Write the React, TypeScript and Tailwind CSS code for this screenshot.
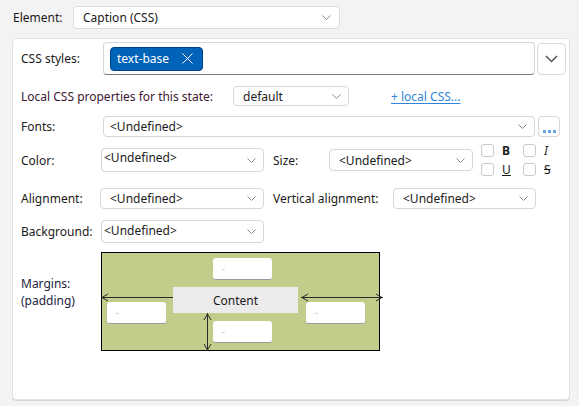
import React from "react";

function Chevron({ className = "" }: { className?: string }) {
  return (
    <svg width="9" height="5" viewBox="0 0 9 5" className={className} fill="none">
      <path d="M0.5 0.5 L4.5 4.5 L8.5 0.5" stroke="#8a8a8a" strokeWidth="1" />
    </svg>
  );
}

function Select({
  value,
  className,
  textClass = "pl-[9px]",
}: {
  value: string;
  className: string;
  textClass?: string;
}) {
  return (
    <div
      className={`flex shrink-0 items-center justify-between rounded-[4px] border border-[#d6d6d6] bg-white pr-[7px] ${className}`}
    >
      <span className={`truncate text-[#1b1b1b] ${textClass}`}>{value}</span>
      <Chevron />
    </div>
  );
}

function Check({ label, labelClass }: { label: string; labelClass: string }) {
  return (
    <div className="flex h-[14px] items-center">
      <div className="h-[13px] w-[13px] rounded-[3px] border border-[#c9c9c9] bg-white" />
      <span className={`ml-[8px] w-[12px] text-[12px] leading-none ${labelClass}`}>{label}</span>
    </div>
  );
}

function SmallBox({ className }: { className: string }) {
  return (
    <div
      className={`absolute flex h-[22px] w-[59px] items-center rounded-[3px] border-b border-[#9a9a9a] bg-white pl-[9px] text-[9px] text-[#b5b5b5] ${className}`}
    >
      -
    </div>
  );
}

function MarginDiagram() {
  return (
    <div className="relative h-[99px] w-[279px] shrink-0 border border-black bg-[#c3cc8b]">
      <SmallBox className="left-[111px] top-[5px]" />
      <div className="absolute left-[71px] top-[34px] flex h-[26px] w-[125px] items-center justify-center bg-[#ebebeb] text-[12px] text-[#1b1b1b]">
        Content
      </div>
      <SmallBox className="left-[5px] top-[49px]" />
      <SmallBox className="left-[204px] top-[49px]" />
      <SmallBox className="left-[111px] top-[68px]" />
      <svg
        className="pointer-events-none absolute left-[-1px] top-[-1px] overflow-visible"
        width="283"
        height="100"
        viewBox="0 0 283 100"
        fill="none"
        stroke="#2a2a2a"
        strokeWidth="1"
      >
        {/* left arrow */}
        <path d="M0 45.5 H72" />
        <path d="M7 42 L1 45.5 L7 49" />
        {/* right arrow */}
        <path d="M200 45.5 H282" />
        <path d="M207 42 L201 45.5 L207 49" />
        <path d="M275 42 L281 45.5 L275 49" />
        {/* vertical arrow */}
        <path d="M106.5 61 V99" />
        <path d="M103 68 L106.5 62 L110 68" />
        <path d="M103 92 L106.5 98 L110 92" />
      </svg>
    </div>
  );
}

export default function App() {
  return (
    <div
      className="h-[406px] w-[579px] overflow-hidden bg-[#f3f3f3] text-[12px] leading-[15px] text-[#1b1b1b]"
      style={{ fontFamily: '"Noto Sans", "Open Sans", sans-serif' }}
    >
      {/* Element row */}
      <div className="flex items-center pl-[13px] pt-[6px]">
        <div className="w-[60px] shrink-0">Element:</div>
        <div className="flex h-[23px] w-[267px] items-center justify-between rounded-[4px] border border-[#dcdcdc] bg-white pl-[9px] pr-[8px]">
          <span>Caption (CSS)</span>
          <Chevron />
        </div>
      </div>

      {/* Panel */}
      <div className="ml-[12px] mt-[9px] h-[362px] w-[558px] rounded-[4px] border border-[#e2e2e2] bg-white pl-[8px] pt-[3px] shadow-[0_1px_0_#d8d8d8]">
        {/* CSS styles */}
        <div className="flex items-center">
          <div className="w-[82px] shrink-0">CSS styles:</div>
          <div className="flex h-[33px] w-[432px] items-center rounded-[4px] border border-[#d6d6d6] border-b-[#7a7a7a] bg-white pl-[6px]">
            <div className="flex h-[24px] w-[93px] items-center rounded-[4px] border border-[#003f8a] bg-[#0063b8] pl-[6px] text-white">
              <span>text-base</span>
              <svg width="11" height="11" viewBox="0 0 11 11" className="ml-[13px]" fill="none" stroke="#ffffff" strokeWidth="1">
                <path d="M0.5 0.5 L10.5 10.5 M10.5 0.5 L0.5 10.5" />
              </svg>
            </div>
          </div>
          <div className="ml-[2px] flex h-[32px] w-[29px] items-center justify-center rounded-[4px] border border-[#dadada] bg-white">
            <svg width="13" height="8" viewBox="0 0 13 8" fill="none">
              <path d="M1 1 L6.5 6.5 L12 1" stroke="#555555" strokeWidth="1.5" />
            </svg>
          </div>
        </div>

        {/* Local CSS */}
        <div className="mt-[11px] flex items-center">
          <div className="w-[212px] shrink-0 text-[#3d1730]">Local CSS properties for this state:</div>
          <Select value="default" className="h-[20px] w-[116px]" textClass="pl-[9px]" />
          <span className="ml-[42px] text-[#2f86d8] underline underline-offset-2">+ local CSS...</span>
        </div>

        {/* Fonts */}
        <div className="mt-[10px] flex items-center">
          <div className="w-[82px] shrink-0">Fonts:</div>
          <Select value="<Undefined>" className="h-[21px] w-[432px]" textClass="pl-[6px]" />
          <div className="ml-[3px] flex h-[21px] w-[22px] items-end justify-center rounded-[4px] border border-[#d6d6d6] bg-white pb-[3px]">
            <div className="flex gap-[2px]">
              <div className="h-[3px] w-[3px] bg-[#6aa6e6]" />
              <div className="h-[3px] w-[3px] bg-[#6aa6e6]" />
              <div className="h-[3px] w-[3px] bg-[#6aa6e6]" />
            </div>
          </div>
        </div>

        {/* Color / Size / styles */}
        <div className="mt-[7px] flex h-[32px] items-center">
          <div className="w-[80px] shrink-0">Color:</div>
          <div className="flex h-[24px] w-[163px] shrink-0 justify-between rounded-[4px] border border-[#d6d6d6] bg-white pr-[7px] pt-[1px]">
            <span className="pl-[2px]">&lt;Undefined&gt;</span>
            <Chevron className="mt-[8px]" />
          </div>
          <div className="ml-[9px] w-[56px] shrink-0">Size:</div>
          <Select value="<Undefined>" className="h-[22px] w-[144px]" textClass="pl-[9px]" />
          <div className="ml-[8px] flex flex-col gap-[5px]">
            <div className="flex gap-[9px]">
              <Check label="B" labelClass="font-bold" />
              <Check label="I" labelClass="italic" />
            </div>
            <div className="flex gap-[9px]">
              <Check label="U" labelClass="underline" />
              <Check label="S" labelClass="line-through" />
            </div>
          </div>
        </div>

        {/* Alignment */}
        <div className="mt-[12px] flex items-center">
          <div className="w-[79px] shrink-0">Alignment:</div>
          <Select value="<Undefined>" className="h-[21px] w-[164px]" textClass="pl-[9px]" />
          <div className="ml-[9px] w-[120px] shrink-0">Vertical alignment:</div>
          <Select value="<Undefined>" className="h-[21px] w-[143px]" textClass="pl-[9px]" />
        </div>

        {/* Background */}
        <div className="mt-[11px] flex items-center">
          <div className="w-[80px] shrink-0">Background:</div>
          <div className="flex h-[23px] w-[163px] shrink-0 items-center justify-between rounded-[4px] border border-[#d6d6d6] bg-white pr-[7px]">
            <span className="-mt-[3px] pl-[2px]">&lt;Undefined&gt;</span>
            <Chevron />
          </div>
        </div>

        {/* Margins */}
        <div className="mt-[9px] flex items-start">
          <div className="w-[80px] shrink-0 pt-[23px] leading-[17px] text-[#1d2540]">
            <div>Margins:</div>
            <div>(padding)</div>
          </div>
          <MarginDiagram />
        </div>
      </div>
    </div>
  );
}
